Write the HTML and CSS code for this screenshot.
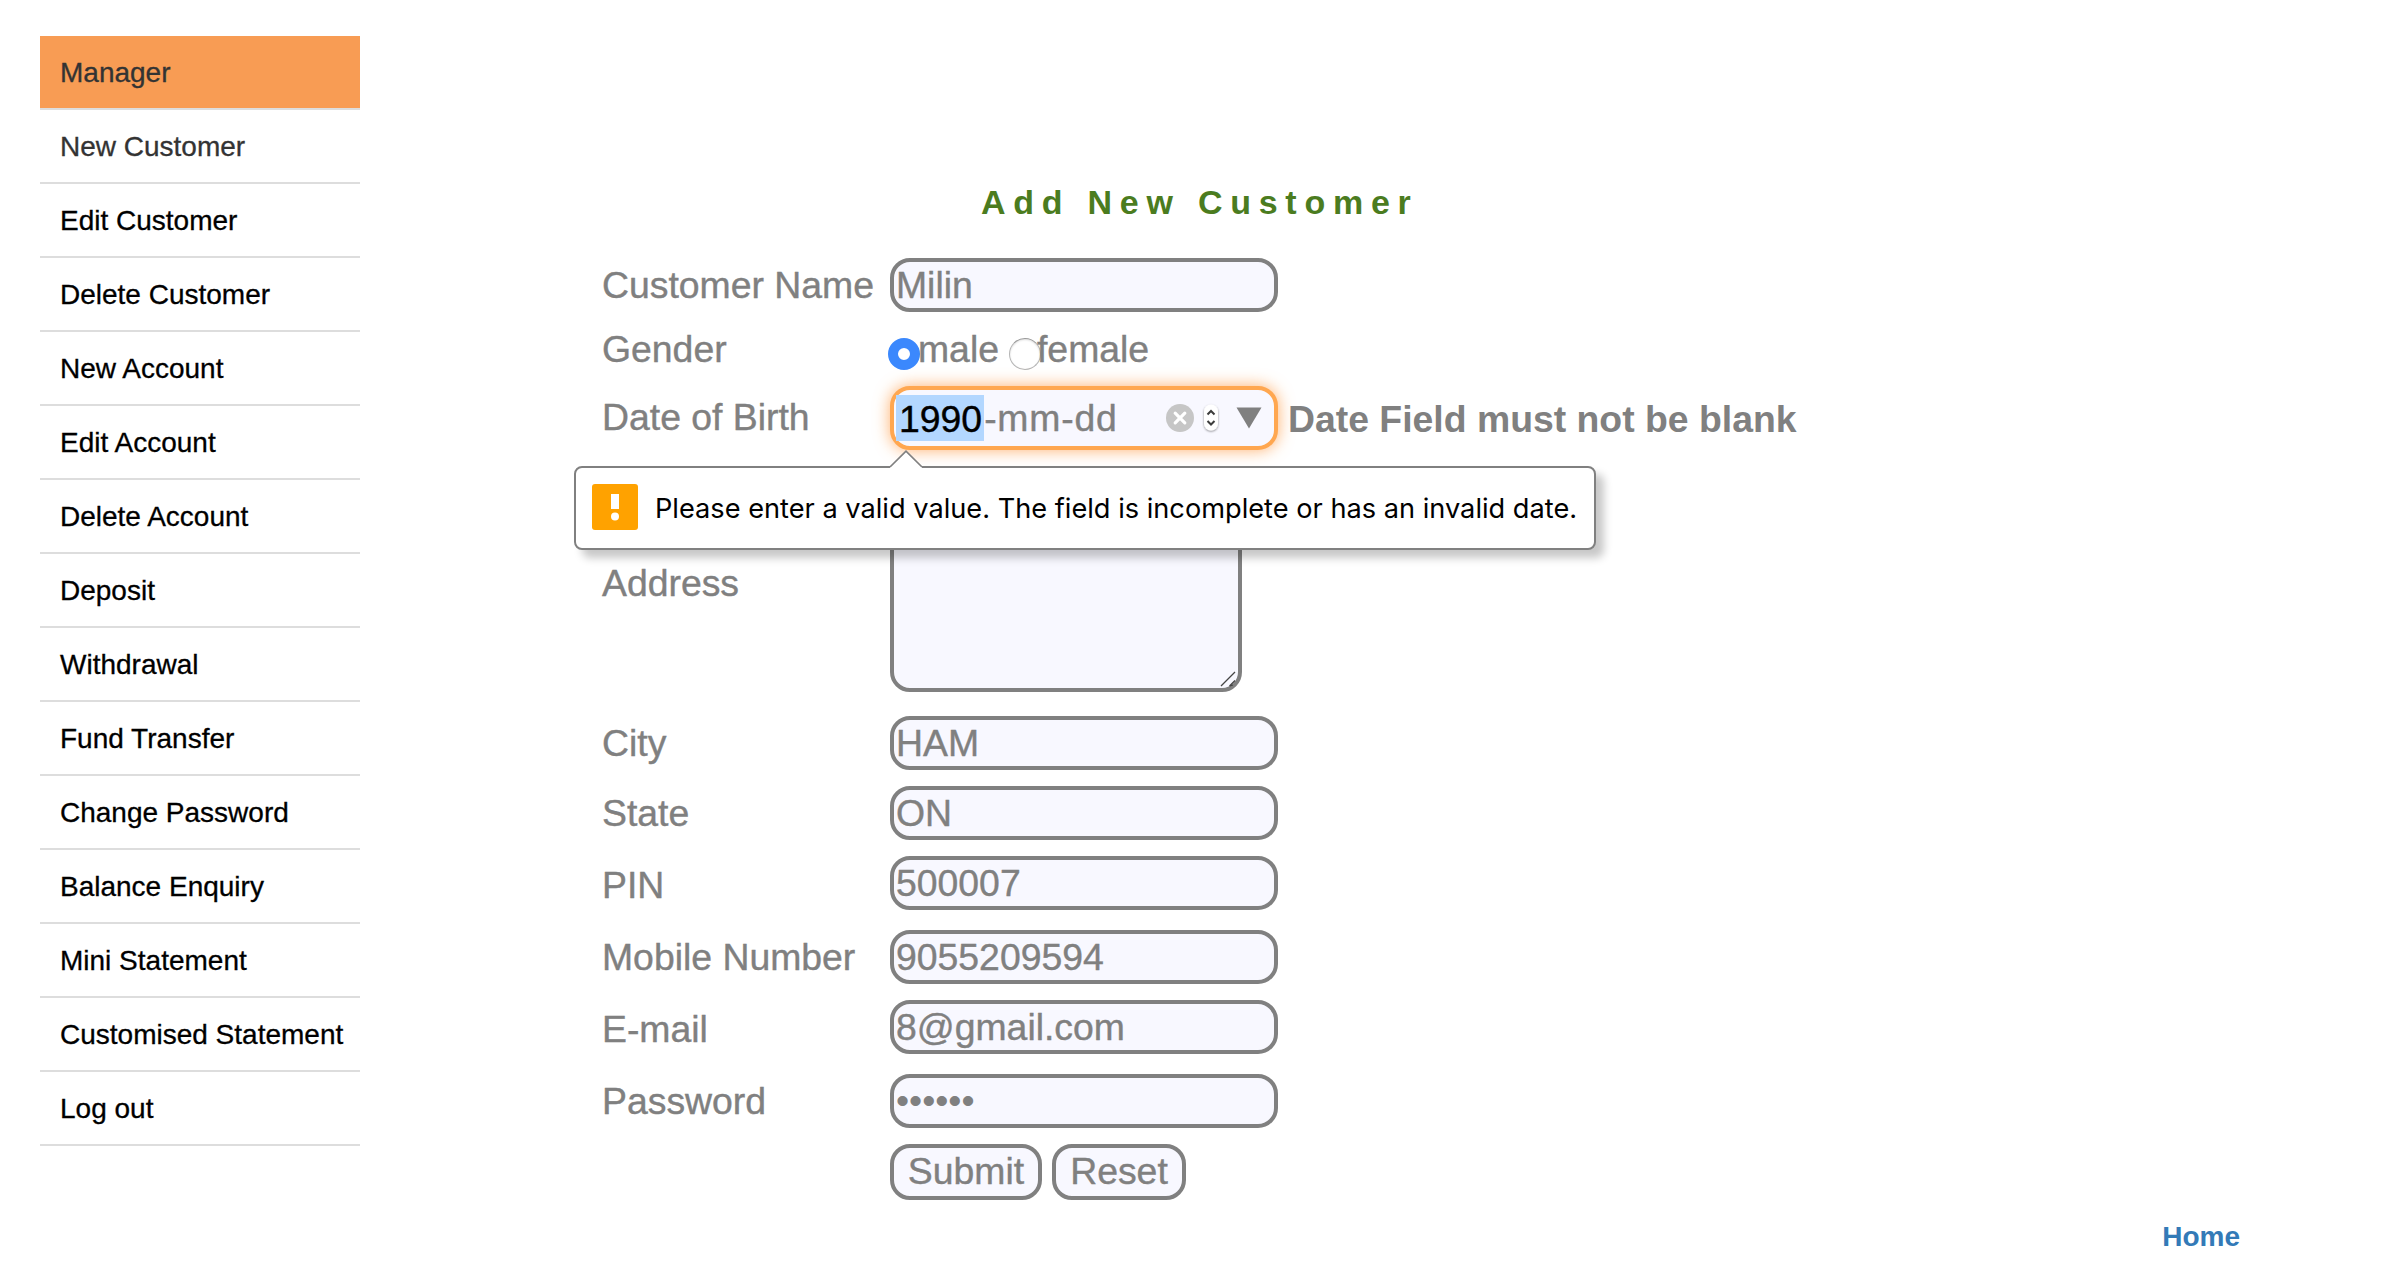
FILE: index.html
```html
<!DOCTYPE html>
<html lang="en">
<head>
<meta charset="utf-8">
<title>Add New Customer</title>
<link rel="stylesheet" href="styles.css">
</head>
<body>
<div class="page">
  <nav class="menu">
    <a class="menu-item menu-title">Manager</a>
    <a class="menu-item current">New Customer</a>
    <a class="menu-item">Edit Customer</a>
    <a class="menu-item">Delete Customer</a>
    <a class="menu-item">New Account</a>
    <a class="menu-item">Edit Account</a>
    <a class="menu-item">Delete Account</a>
    <a class="menu-item">Deposit</a>
    <a class="menu-item">Withdrawal</a>
    <a class="menu-item">Fund Transfer</a>
    <a class="menu-item">Change Password</a>
    <a class="menu-item">Balance Enquiry</a>
    <a class="menu-item">Mini Statement</a>
    <a class="menu-item">Customised Statement</a>
    <a class="menu-item">Log out</a>
  </nav>
  <main class="content">
    <h1 class="heading">Add New Customer</h1>
    <form class="form">
      <div class="row"><label class="label">Customer Name</label><div class="field">Milin</div></div>
      <div class="row gender">
        <label class="label">Gender</label>
        <div class="options">
          <span class="radio checked"></span><span class="option">male</span>
          <span class="radio second"></span><span class="option">female</span>
        </div>
      </div>
      <div class="row birth">
        <label class="label">Date of Birth</label>
        <div class="birth-cell">
          <div class="field date">
            <span class="year">1990</span><span class="date-rest">-mm-dd</span>
            <svg class="date-tools" width="102" height="32" viewBox="0 0 102 32">
              <defs><filter id="soft" x="-50%" y="-50%" width="200%" height="200%"><feDropShadow dx="0" dy="1" stdDeviation="1" flood-opacity=".45"/></filter></defs>
              <circle cx="14" cy="16" r="14" fill="#c6c6c6"/>
              <path d="M9.2 11.2l9.6 9.6M18.8 11.2l-9.6 9.6" stroke="#fff" stroke-width="3.2" stroke-linecap="round"/>
              <rect x="38" y="2.500" width="14" height="26" rx="7" fill="#fff" filter="url(#soft)"/>
              <path d="M41.500 12.500l3.500-3.500 3.500 3.500M41.500 19l3.500 3.500 3.500-3.500" fill="none" stroke="#3c3c3c" stroke-width="2"/>
              <path d="M70.500 5.500h25L83 26.500z" fill="#808080"/>
            </svg>
          </div>
          <strong class="error">Date Field must not be blank</strong>
          <div class="bubble">
            <svg class="bubble-arrow" width="34" height="19" viewBox="0 0 34 19"><path d="M1 19V17L17 1.200 33 17v2z" fill="#fff"/><path d="M1 17L17 1.200 33 17" fill="none" stroke="#808080" stroke-width="1.700"/></svg>
            <svg class="warn" width="46" height="46" viewBox="0 0 46 46"><rect width="46" height="46" rx="3" fill="#ffa200"/><path d="M19 10h8v15h-8z" fill="#fff"/><circle cx="23" cy="32.500" r="4" fill="#fff"/></svg>
            <span class="bubble-text">Please enter a valid value. The field is incomplete or has an invalid date.</span>
          </div>
        </div>
      </div>
      <div class="row address">
        <label class="label">Address</label>
        <div class="field area"><svg width="18" height="18" viewBox="0 0 18 18"><path d="M1 16L15 2M9.500 16L15 10.500M10 16l3-1" stroke="#444" stroke-width="1.300"/></svg></div>
      </div>
      <div class="row city"><label class="label">City</label><div class="field">HAM</div></div>
      <div class="row tall-gap"><label class="label">State</label><div class="field">ON</div></div>
      <div class="row tall-gap"><label class="label lower">PIN</label><div class="field">500007</div></div>
      <div class="row wide-gap"><label class="label">Mobile Number</label><div class="field">9055209594</div></div>
      <div class="row tall-gap"><label class="label lower">E-mail</label><div class="field">8@gmail.com</div></div>
      <div class="row wide-gap"><label class="label">Password</label><div class="field password">••••••</div></div>
      <div class="row tall-gap"><span></span><div class="actions"><div class="button submit">Submit</div><div class="button reset">Reset</div></div></div>
    </form>
    <a class="home">Home</a>
  </main>
</div>
</body>
</html>
```
FILE: styles.css
```css
* { box-sizing: border-box; }
body {
  margin: 0;
  background: #fff;
  font-family: "Liberation Sans", Arial, sans-serif;
  font-size: 28px;
}
.page { display: flex; height: 1268px; padding: 36px 0 0 40px; overflow: hidden; }
.menu { width: 320px; flex: none; -webkit-text-stroke: .3px; }
.menu-item {
  display: block;
  height: 74px;
  padding: 1px 0 0 20px;
  border-bottom: 2px solid #ddd;
  line-height: 72px;
  color: #000;
  white-space: nowrap;
}
.menu-title { background: #f89c54; background-clip: padding-box; color: #333; }
.current { color: #333; }
.content { display: flex; flex-direction: column; flex: 1; padding-left: 242px; }
.heading {
  height: 200px;
  margin: 0 0 22px;
  padding: 146px 0 0 379px;
  font-size: 34px;
  line-height: 40px;
  letter-spacing: 7.750px;
  color: #4b7c1f;
  white-space: nowrap;
}
.form { display: flex; flex-direction: column; color: #808080; font-size: 37.360px; -webkit-text-stroke: .4px; }
.row { display: grid; grid-template-columns: 288px 1fr; line-height: 54px; }
.label { white-space: nowrap; }
.lower { padding-top: 2px; height: 54px; }
.field {
  width: 388px;
  height: 54px;
  border: 4px solid #808080;
  border-radius: 20px;
  background: #f8f8ff;
  padding-left: 2px;
  line-height: 46px;
  white-space: nowrap;
}
.gender { margin-top: 10px; }
.options { display: flex; }
.radio {
  width: 32px;
  height: 32px;
  margin: 16px 0 0 -2px;
  border: 1px solid #b5b5b5;
  border-top-color: #999;
  border-radius: 50%;
  background: #fff;
  box-shadow: inset 0 1px 2px #ddd;
}
.checked { border: 10px solid #3b88fd; box-shadow: none; }
.checked + .option { margin-left: -2px; }
.second { margin-left: 10px; }
.second + .option { margin-left: -4px; }
.birth { margin-top: 10px; line-height: 62px; }
.birth-cell { position: relative; display: flex; height: 64px; }
.date {
  display: flex;
  align-items: center;
  height: 64px;
  border-color: #ffa750;
  box-shadow: 0 0 16px rgba(255, 150, 60, .75);
  line-height: 48px;
}
.year { height: 46px; padding: 0 2px 0 3px; background: #b3d7ff; color: #000; }
.date-rest { flex: 1; letter-spacing: .8px; }
.date-tools { flex: none; margin-right: 6px; }
.error { margin-left: 10px; line-height: 66px; white-space: nowrap; -webkit-text-stroke: 0; }
.bubble {
  position: absolute;
  left: -316px;
  top: 80px;
  display: flex;
  align-items: center;
  width: 1022px;
  height: 84px;
  padding-left: 16px;
  border: 2px solid #808080;
  border-radius: 8px;
  background: #fff;
  box-shadow: 8px 8px 8px rgba(0, 0, 0, .22);
  z-index: 1;
}
.bubble-arrow { position: absolute; left: 313px; top: -18px; }
.warn { margin-top: -2px; }
.bubble-text {
  margin-left: 17px;
  padding-top: 2px;
  font-family: Inter, sans-serif;
  font-size: 27.200px;
  line-height: 40px;
  color: #000;
  white-space: nowrap;
  -webkit-text-stroke: 0;
}
.address { margin-top: 24px; line-height: 218px; }
.area { display: flex; justify-content: flex-end; align-items: flex-end; width: 352px; height: 218px; }
.city { margin-top: 24px; }
.tall-gap { margin-top: 16px; }
.wide-gap { margin-top: 20px; }
.password { line-height: 44px; -webkit-text-stroke: 0; }
.actions { display: flex; gap: 10px; }
.button {
  height: 56px;
  border: 4px solid #808080;
  border-radius: 20px;
  background: #f8f8ff;
  line-height: 46px;
  text-align: center;
}
.submit { width: 152px; }
.reset { width: 134px; }
.home {
  align-self: flex-end;
  margin: 21px 160px 0 0;
  font-weight: bold;
  line-height: 32px;
  color: #337ab7;
}
```
